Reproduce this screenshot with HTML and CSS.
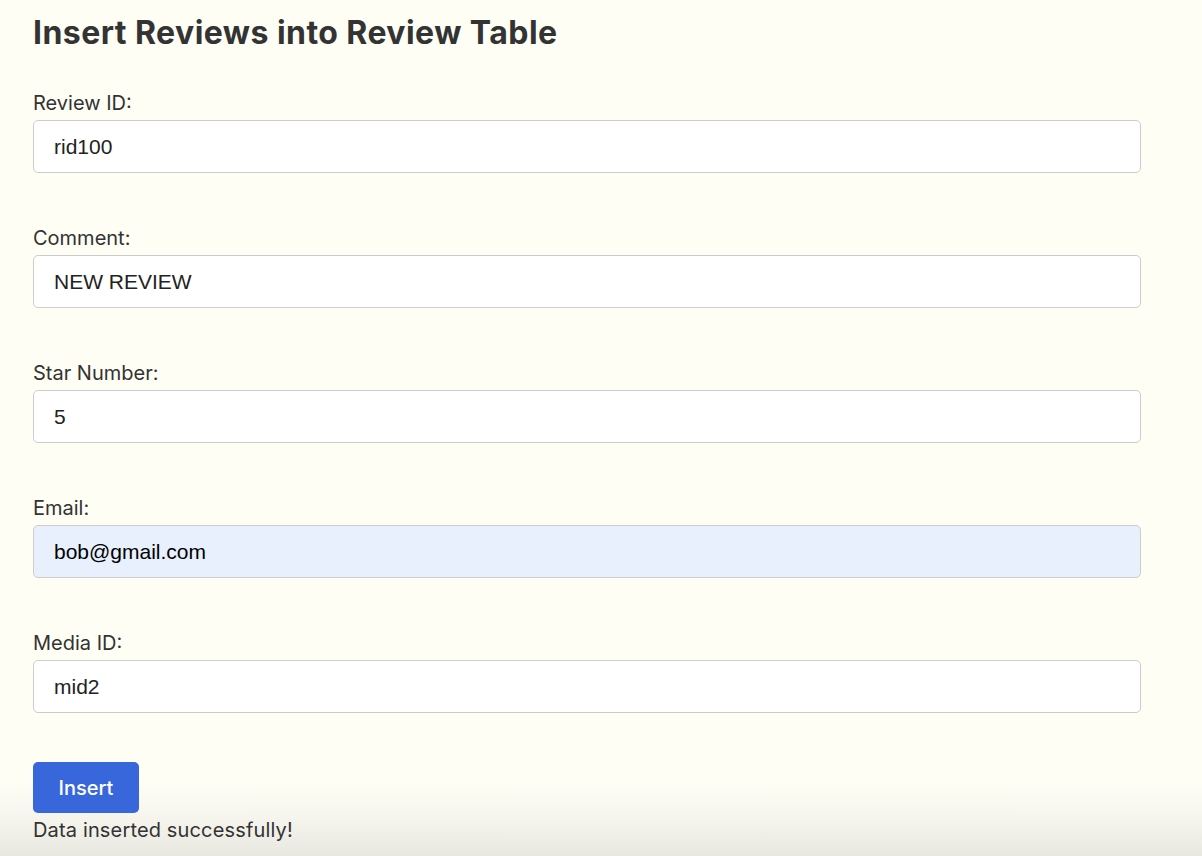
FILE: index.html
```html
<!DOCTYPE html>
<html>
<head>
<meta charset="utf-8">
<link rel="stylesheet" href="styles.css">
</head>
<body>
<main class="page">
  <h1 class="title">Insert Reviews into Review Table</h1>
  <form class="form">
    <div class="field">
      <label class="label">Review ID:</label>
      <input class="input" type="text" value="rid100">
    </div>
    <div class="field">
      <label class="label">Comment:</label>
      <input class="input" type="text" value="NEW REVIEW">
    </div>
    <div class="field">
      <label class="label">Star Number:</label>
      <input class="input" type="text" value="5">
    </div>
    <div class="field">
      <label class="label">Email:</label>
      <input class="input input-autofill" type="text" value="bob@gmail.com">
    </div>
    <div class="field">
      <label class="label">Media ID:</label>
      <input class="input" type="text" value="mid2">
    </div>
    <button class="btn" type="button">Insert</button>
  </form>
  <p class="message">Data inserted successfully!</p>
</main>
</body>
</html>
```
FILE: styles.css
```css
html, body {
  margin: 0;
  padding: 0;
}
html {
  background: #fefef5;
}
body {
  color: #333333;
  font-family: Inter, "Noto Sans", sans-serif;
  min-height: 856px;
  background: linear-gradient(to bottom, #fefef5 0px, #fefef5 780px, #f6f6ee 815px, #e8e7e0 856px);
}
.page {
  padding: 14px 33px 0 33px;
  width: 1108px;
}
.title {
  font-size: 32px;
  line-height: 38px;
  letter-spacing: 0.45px;
  font-weight: 700;
  margin: 0 0 39px 0;
  color: #333333;
}
.form {
  display: flex;
  flex-direction: column;
}
.field {
  display: flex;
  flex-direction: column;
}
.field + .field {
  margin-top: 53px;
}
.label {
  font-size: 20px;
  line-height: 24px;
  margin-bottom: 5px;
  color: #333333;
}
.input {
  box-sizing: border-box;
  height: 53px;
  width: 1108px;
  border: 1px solid #cccccc;
  border-radius: 5px;
  background: #ffffff;
  padding: 0 20px;
  font-family: "Liberation Sans", Arial, sans-serif;
  font-size: 21px;
  color: #222222;
  margin: 0;
  outline: none;
}
.input-autofill {
  background: #e8f0fe;
  color: #000000;
}
.btn {
  align-self: flex-start;
  width: 106px;
  height: 51px;
  margin-top: 49px;
  background: #3867db;
  color: #ffffff;
  border: none;
  border-radius: 5px;
  font-family: Inter, "Noto Sans", sans-serif;
  font-size: 20px;
  font-weight: 500;
  padding: 0;
}
.message {
  margin: 5px 0 0 0;
  font-size: 20px;
  line-height: 24px;
  letter-spacing: 0.15px;
  color: #333333;
}
```
